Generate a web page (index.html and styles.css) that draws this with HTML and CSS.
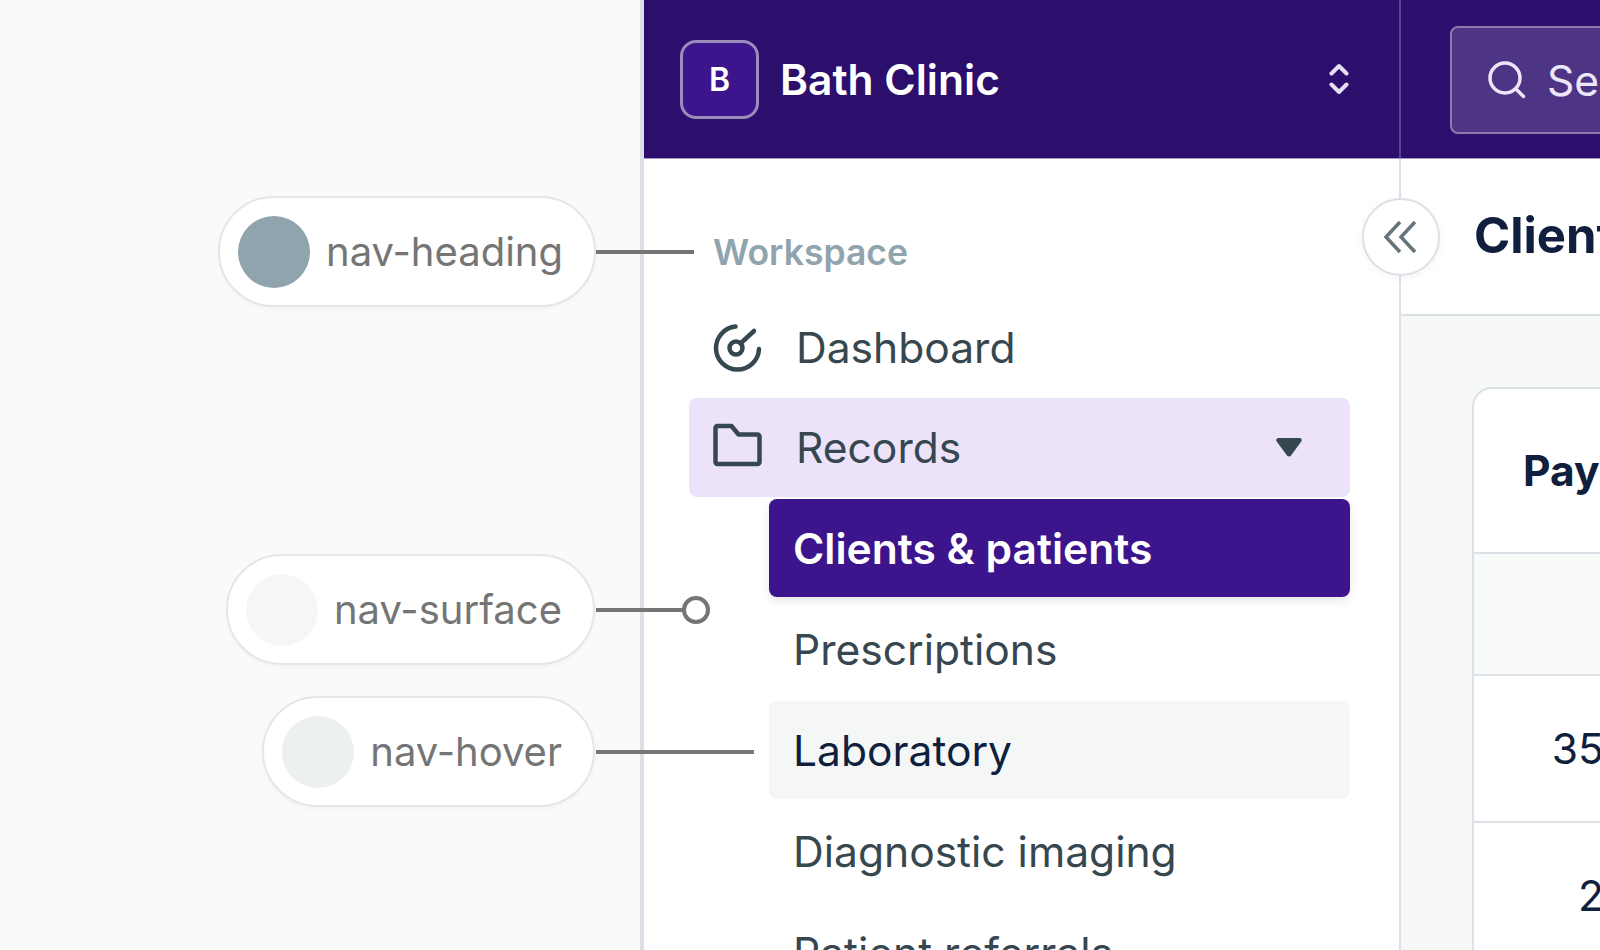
FILE: index.html
```html
<!DOCTYPE html>
<html lang="en">
<head>
<meta charset="utf-8">
<title>Bath Clinic</title>
<link rel="stylesheet" href="styles.css">
</head>
<body>
<div class="stage">
  <aside class="gutter">
    <div class="pill pill-heading"><span class="dot dot-heading"></span><span class="pill-label">nav-heading</span></div>
    <span class="lead lead-heading"></span>
    <div class="pill pill-surface"><span class="dot dot-surface"></span><span class="pill-label">nav-surface</span></div>
    <span class="lead lead-surface"><i class="ring"></i></span>
    <div class="pill pill-hover"><span class="dot dot-hover"></span><span class="pill-label">nav-hover</span></div>
    <span class="lead lead-hover"></span>
  </aside>
  <div class="app">
    <header class="topbar">
      <div class="brand">
        <span class="logo">B</span>
        <span class="brand-name">Bath Clinic</span>
        <svg class="updown" viewBox="0 0 20 32" width="20" height="32" fill="none" stroke="currentColor" stroke-width="4" stroke-linecap="round" stroke-linejoin="round"><path d="M2.500 10.500 10 3l7.500 7.500M2.500 21.500 10 29l7.500-7.500"/></svg>
      </div>
      <div class="search">
        <svg viewBox="0 0 40 40" width="40" height="40" fill="none" stroke="currentColor" stroke-width="3.500" stroke-linecap="round"><circle cx="18" cy="18" r="15"/><path d="m29 29 7.500 7.500"/></svg>
        <span>Search</span>
      </div>
    </header>
    <div class="body">
      <nav class="sidebar">
        <div class="nav-heading">Workspace</div>
        <a class="nav-item nav-first">
          <svg class="nav-icon" viewBox="0 0 50 50" width="50" height="50" fill="none" stroke="currentColor" stroke-width="4.500" stroke-linecap="round"><path d="M22.500 3.600A21.500 21.500 0 1 0 46 26"/><circle cx="23" cy="25" r="6.500"/><path d="M28.500 19.500 41 8"/></svg>
          <span>Dashboard</span>
        </a>
        <a class="nav-item nav-open">
          <svg class="nav-icon" viewBox="0 0 50 50" width="50" height="50" fill="none" stroke="currentColor" stroke-width="4.500" stroke-linejoin="round"><path d="M2.500 5a2 2 0 0 1 2-2h14l7 8.500h19a2 2 0 0 1 2 2V39a2 2 0 0 1-2 2H4.500a2 2 0 0 1-2-2z"/></svg>
          <span>Records</span>
          <svg class="caret" viewBox="0 0 26 20" width="26" height="20" fill="currentColor"><path d="M2.500 0h21c2 0 3 2 1.800 3.500l-10.300 14c-1 1.400-3 1.400-4 0L.700 3.500C-.500 2 .500 0 2.500 0z"/></svg>
        </a>
        <div class="subnav">
          <a class="sub-item sub-active">Clients &amp; patients</a>
          <a class="sub-item">Prescriptions</a>
          <a class="sub-item sub-hover">Laboratory</a>
          <a class="sub-item">Diagnostic imaging</a>
          <a class="sub-item">Patient referrals</a>
        </div>
      </nav>
      <button class="collapse" type="button" aria-label="Collapse">
        <svg viewBox="0 0 34 34" width="34" height="34" fill="none" stroke="currentColor" stroke-width="3.500"><path d="M16 2 2 17l14 15M31 2 17 17l14 15"/></svg>
      </button>
      <main class="main">
        <div class="page-title"><h1>Clients &amp; patients</h1></div>
        <div class="content">
          <section class="card">
            <div class="row row-head"><span class="payer">Payer</span></div>
            <div class="row row-filter"></div>
            <div class="row row-data"><span class="num">3560</span></div>
            <div class="row row-data"><span class="num">280</span></div>
          </section>
        </div>
      </main>
    </div>
  </div>
</div>
</body>
</html>
```
FILE: styles.css
```css
* { box-sizing: border-box; }
html, body { margin: 0; height: 100%; overflow: hidden; }
body { font-family: Inter, "Liberation Sans", sans-serif; background: #fafafa; }
.stage { display: flex; height: 950px; width: 1600px; overflow: hidden; }

.gutter { position: relative; width: 640px; flex: none; background: #fafafa; z-index: 3; }
.pill {
  position: absolute; right: 45px; height: 111px; display: flex; align-items: center; gap: 16px;
  padding: 0 31px 0 18px; background: #fff; border: 2px solid #e6e6ea; border-radius: 56px;
  box-shadow: 0 2px 4px rgba(0,0,0,.03); font-size: 40px; color: #757575; white-space: nowrap;
}
.pill-label { margin-top: -1px; }
.pill-heading { top: 196px; right: 44px; }
.pill-surface { top: 554px; }
.pill-hover { top: 696px; }
.dot { width: 72px; height: 72px; border-radius: 50%; flex: none; }
.dot-heading { background: #90a4ae; }
.dot-surface { background: #f5f7f7; }
.dot-hover { background: #ecf0f1; }
.lead { position: absolute; left: 596px; height: 4px; background: #757575; }
.lead-heading { top: 250px; width: 98px; }
.lead-surface { top: 608px; width: 100px; }
.lead-hover { top: 750px; width: 158px; }
.ring {
  position: absolute; right: -14px; top: -12px; width: 28px; height: 28px;
  border: 4px solid #757575; border-radius: 50%; background: #fff;
}

.app { flex: 1; min-width: 0; border-left: 4px solid #dce1e8; display: flex; flex-direction: column; background: #fff; }
.topbar { height: 159px; flex: none; display: flex; background: #2c0e6d; border-bottom: 1px solid #a79bc4; }
.brand {
  width: 757px; flex: none; display: flex; align-items: center; padding: 0 50px 0 36px; gap: 21px;
  border-right: 2px solid #5b4490; color: #fff;
}
.logo {
  width: 79px; height: 79px; flex: none; display: flex; align-items: center; justify-content: center;
  background: #3c148c; border: 3px solid #9c8cbc; border-radius: 16px; font-size: 32px; font-weight: 600;
}
.brand-name { flex: 1; font-size: 42.56px; font-weight: 600; }
.updown { color: #e6dff2; }
.search {
  margin: 26px 0 0 49px; width: 400px; height: 108px; flex: none; display: flex; align-items: center; gap: 20px;
  padding: 0 35px; background: #4e3484; border: 2px solid #8b7aae; border-radius: 8px;
  font-size: 42.56px; color: #ece6f6;
}
.body { position: relative; flex: 1; min-height: 0; display: flex; }
.sidebar { width: 755px; flex: none; padding: 70px 49px 0 45px; overflow: hidden; color: #37474f; }
.nav-heading { margin: 0 0 0 24px; font-size: 35.5px; font-weight: 600; color: #90a4ae; line-height: 48px; height: 48px; }
.nav-item {
  display: flex; align-items: center; height: 99px; margin-top: 1px; padding: 0 48px 0 24px; gap: 33px;
  border-radius: 8px; font-size: 42.56px; color: #37474f;
}
.nav-first { margin-top: 21px; }
.nav-item span { flex: 1; }
.nav-icon { flex: none; }
.nav-open { background: #ece3fb; }
.caret { flex: none; }
.subnav { margin: 2px 0 0 80px; display: flex; flex-direction: column; }
.sub-item {
  display: flex; align-items: center; height: 98px; padding: 0 24px; border-radius: 8px;
  font-size: 42.56px; color: #37474f; white-space: nowrap; margin-bottom: 3px;
}
.sub-active { background: #3c148c; color: #fff; font-weight: 600; box-shadow: 0 4px 10px rgba(0,0,0,.1); }
.sub-hover { background: #f5f7f7; color: #0f1f3d; }
.collapse {
  position: absolute; left: 718px; top: 39px; width: 78px; height: 78px; padding: 0; display: flex;
  align-items: center; justify-content: center; background: #fff; border: 2px solid #dce1e8; border-radius: 50%;
  color: #66757c; box-shadow: 0 2px 8px rgba(0,0,0,.05); z-index: 2;
}
.collapse svg { margin-left: -1px; }
.main { flex: 1; min-width: 0; border-left: 2px solid #dce1e8; background: #f7f9f9; display: flex; flex-direction: column; }
.page-title { height: 157px; flex: none; display: flex; align-items: center; padding-left: 73px; background: #fff; border-bottom: 2px solid #dce1e8; padding-bottom: 2px; }
.page-title h1 { margin: 0; font-size: 49px; font-weight: 700; color: #0f1f3d; white-space: nowrap; }
.content { padding: 71px 0 0 71px; }
.card { width: 900px; background: #fff; border: 2px solid #dce1e8; border-radius: 20px; }
.row { display: flex; align-items: center; border-bottom: 2px solid #dce1e8; }
.row-head { height: 165px; padding-left: 49px; }
.payer { font-size: 42.56px; font-weight: 700; color: #0f1f3d; }
.row-filter { height: 122px; background: #f9fafa; }
.row-data { height: 147px; }
.num { width: 183px; text-align: right; font-size: 42.56px; color: #0f1f3d; }
```
